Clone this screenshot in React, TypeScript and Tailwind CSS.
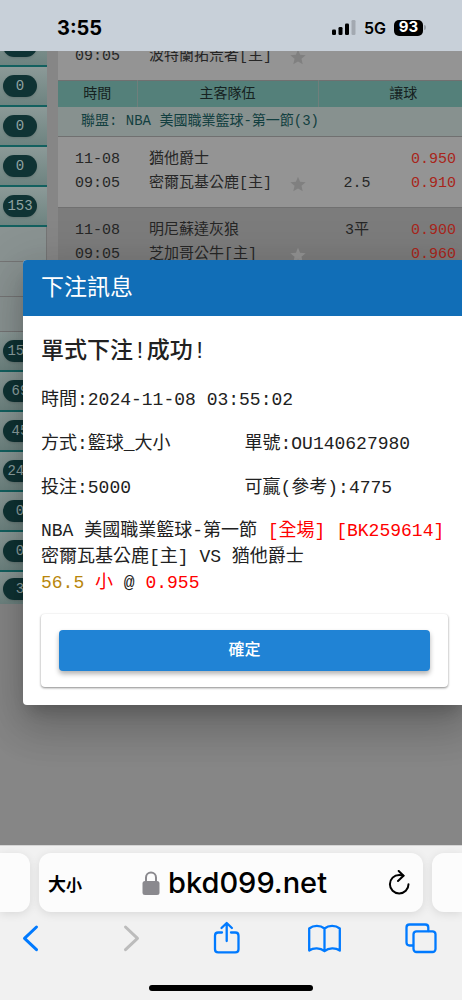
import type { ReactNode } from 'react'

const topCounts = ['', '0', '0', '0', '153']
const bottomCounts = ['150', '69', '45', '240', '0', '0', '3']

type Match = {
  date: string
  time: string
  away: string
  home: string
  lines: { handicap: string; odds: string }[]
  alt?: boolean
}

const matches: Match[] = [
  {
    date: '11-08',
    time: '09:05',
    away: '猶他爵士',
    home: '密爾瓦基公鹿[主]',
    lines: [
      { handicap: '', odds: '0.950' },
      { handicap: '2.5', odds: '0.910' },
    ],
  },
  {
    date: '11-08',
    time: '09:05',
    away: '明尼蘇達灰狼',
    home: '芝加哥公牛[主]',
    lines: [
      { handicap: '3平', odds: '0.900' },
      { handicap: '', odds: '0.960' },
    ],
    alt: true,
  },
]

function StatusBar() {
  return (
    <header className="flex h-[51px] shrink-0 items-center justify-between bg-[#c8d0d9] pt-1 pr-9 pl-[57px] font-['Inter',sans-serif] text-black">
      <span className="text-xl font-bold">3:55</span>
      <div className="flex items-center gap-2">
        <svg width="24" height="15" viewBox="0 0 24 15" aria-hidden="true">
          <rect x="0" y="9.500" width="4" height="5.500" rx="1.3" />
          <rect x="6.500" y="7" width="4" height="8" rx="1.3" />
          <rect x="13" y="3.500" width="4" height="11.500" rx="1.3" />
          <rect x="19.500" y="0" width="4" height="15" rx="1.3" fill="#a3a9b1" />
        </svg>
        <span className="text-base font-semibold">5G</span>
        <div className="flex items-center gap-px">
          <span className="flex h-4 w-[29px] items-center justify-center rounded-[5px] bg-black text-[15px] font-bold text-white">
            93
          </span>
          <span className="h-[5px] w-[2px] rounded-r-full bg-[#9aa1a9]" />
        </div>
      </div>
    </header>
  )
}

function CountCell({ value, last }: { value: string; last?: boolean }) {
  return (
    <li
      className={
        last
          ? 'flex h-8 items-end bg-linear-to-b from-[#8c9a98] to-[#6d8380] pb-1 pl-[3px]'
          : 'flex h-10 items-center border-b-2 border-[#12605f] bg-linear-to-b from-[#8c9a98] to-[#6d8380] pl-[3px]'
      }
    >
      <span className="flex h-[22px] w-[34px] items-center justify-center rounded-full bg-[#0f3334] text-sm text-[#8fa3a3] shadow-sm">
        {value}
      </span>
    </li>
  )
}

function Sidebar() {
  return (
    <ul className="-mt-6 w-[47px] shrink-0">
      {topCounts.map((count, i) => (
        <CountCell key={i} value={count} />
      ))}
      <li className="h-[35px] border-r border-b border-[#757575] bg-[#8a9392]" />
      <li className="h-[35px] border-r border-b border-[#757575] bg-[#8a9392]" />
      <li className="h-[35px] border-r border-b border-[#757575] bg-[#8a9392]" />
      {bottomCounts.map((count, i) => (
        <CountCell key={i} value={count} last={i === bottomCounts.length - 1} />
      ))}
    </ul>
  )
}

function Star({ light }: { light?: boolean }) {
  return (
    <svg
      width="16"
      height="16"
      viewBox="0 0 24 24"
      fill={light ? '#939393' : '#808080'}
      className="shrink-0"
      aria-hidden="true"
    >
      <path d="M12 1l3.2 7.7 8.3.7-6.3 5.4 1.9 8.2L12 18.600l-7.100 4.400 1.900-8.200L.5 9.400l8.300-.7z" />
    </svg>
  )
}

function HomeTeam({ name, alt }: { name: string; alt?: boolean }) {
  return (
    <div className="flex h-6 items-center justify-between pr-3 whitespace-nowrap">
      {name}
      <Star light={alt} />
    </div>
  )
}

function MatchRow({ match }: { match: Match }) {
  return (
    <tr
      className={
        match.alt
          ? 'h-[71px] border-b border-[#707070] bg-[#7c7c7c] align-top'
          : 'h-[71px] border-b border-[#707070] bg-[#949494] align-top'
      }
    >
      <td className="pt-[11px] pl-[17px]">
        <div className="h-6">{match.date}</div>
        <div className="h-6">{match.time}</div>
      </td>
      <td className="pt-[11px] pl-3">
        <div className="h-6">{match.away}</div>
        <HomeTeam name={match.home} alt={match.alt} />
      </td>
      <td className="pt-[11px]">
        {match.lines.map((line, i) => (
          <div key={i} className="flex h-6">
            <span className="w-[78px] text-center">{line.handicap}</span>
            <span className="pl-[15px] text-[#a8251b]">{line.odds}</span>
          </div>
        ))}
      </td>
    </tr>
  )
}

function OddsTable() {
  return (
    <table className="-mt-[9px] w-full min-w-[430px] table-fixed border-collapse text-[15px] leading-6 text-[#262626]">
      <colgroup>
        <col className="w-[79px]" />
        <col className="w-[181px]" />
        <col />
      </colgroup>
      <tbody>
        <tr className="h-[38px] border-b border-[#707070] bg-[#949494] align-top">
          <td className="pt-[3px] pl-[17px]">09:05</td>
          <td className="pt-[3px] pl-3">
            <HomeTeam name="波特蘭拓荒者[主]" />
          </td>
          <td />
        </tr>
        <tr className="h-[27px] bg-[#54807a] text-sm text-[#162221]">
          <th className="border-r border-[#6f7f7c] font-normal">時間</th>
          <th className="border-r border-[#6f7f7c] font-normal">主客隊伍</th>
          <th className="font-normal">讓球</th>
        </tr>
        <tr className="h-[29px] border-b border-[#707070] bg-[#87918f] text-sm text-[#123f40]">
          <td colSpan={3} className="pl-[23px]">
            聯盟: NBA 美國職業籃球-第一節(3)
          </td>
        </tr>
        {matches.map((match) => (
          <MatchRow key={match.away} match={match} />
        ))}
      </tbody>
    </table>
  )
}

function BetDialog() {
  return (
    <section
      role="dialog"
      aria-labelledby="bet-title"
      className="absolute top-[209px] -right-1 left-[23px] overflow-hidden rounded bg-white text-lg text-[#212121] shadow-[0_11px_15px_-7px_rgba(0,0,0,0.2),0_24px_38px_3px_rgba(0,0,0,0.14),0_9px_46px_8px_rgba(0,0,0,0.12)]"
    >
      <h2 id="bet-title" className="flex h-14 items-center bg-[#116eb7] px-[18px] pt-1 text-[23px] text-white">
        下注訊息
      </h2>
      <div className="px-[18px] pt-[18px] pb-[18px]">
        <h3 className="text-[23px] leading-9 font-medium">單式下注!成功!</h3>
        <dl className="mt-2 grid grid-cols-2 leading-[44px]">
          <Field label="時間" wide>2024-11-08 03:55:02</Field>
          <Field label="方式">籃球_大小</Field>
          <Field label="單號">OU140627980</Field>
          <Field label="投注">5000</Field>
          <Field label="可贏(參考)">4775</Field>
        </dl>
        <div className="mt-2 leading-[26px] whitespace-nowrap">
          <p>
            NBA 美國職業籃球-第一節 <span className="text-[#ff0000]">[全場] [BK259614]</span>
          </p>
          <p>密爾瓦基公鹿[主] VS 猶他爵士</p>
          <p>
            <span className="text-[#b8860b]">56.5</span> <span className="text-[#ff0000]">小</span> @{' '}
            <span className="text-[#ff0000]">0.955</span>
          </p>
        </div>
        <div className="mt-[18px] rounded-sm px-[18px] py-4 shadow-[0_1px_3px_rgba(0,0,0,0.2),0_1px_2px_rgba(0,0,0,0.3)]">
          <button
            type="button"
            className="h-[41px] w-full rounded bg-[#2083d5] text-base font-medium text-white shadow-[0_3px_5px_rgba(0,0,0,0.3)]"
          >
            確定
          </button>
        </div>
      </div>
    </section>
  )
}

function Field({ label, wide, children }: { label: string; wide?: boolean; children: ReactNode }) {
  return (
    <div className={wide ? 'col-span-2 flex' : 'flex whitespace-nowrap'}>
      <dt>{label}:</dt>
      <dd>{children}</dd>
    </div>
  )
}

function AddressBar() {
  return (
    <div className="flex h-[59px] gap-[9px]">
      <div className="w-[30px] rounded-r-xl bg-[#fcfcfc] shadow-[0_2px_10px_rgba(0,0,0,0.1)]" />
      <div className="flex flex-1 items-center justify-between rounded-xl bg-[#fcfcfc] pr-3 pl-[9px] shadow-[0_2px_10px_rgba(0,0,0,0.1)]">
        <button
          type="button"
          className="flex items-baseline font-['Noto_Sans_CJK_TC',sans-serif] text-lg font-bold text-black"
        >
          大<span className="text-base">小</span>
        </button>
        <a
          href="#"
          className="flex items-center gap-2 font-['Inter',sans-serif] text-[29px] font-medium text-black"
        >
          <svg width="18" height="24" viewBox="0 0 18 24" aria-hidden="true">
            <rect x="0.500" y="10" width="17" height="14" rx="2.500" fill="#8a898e" />
            <path d="M4 11V6.500a5 5 0 0 1 10 0V11" fill="none" stroke="#8a898e" strokeWidth="2" />
          </svg>
          bkd099.net
        </a>
        <button type="button" aria-label="重新載入">
          <svg
            width="24"
            height="26"
            viewBox="0 0 24 26"
            fill="none"
            stroke="#000"
            strokeWidth="2"
            strokeLinecap="round"
            strokeLinejoin="round"
          >
            <path d="M21.500 14.200a9.300 9.300 0 1 1-9.300-9.300c1.600 0 3 .2 4.300.8" />
            <path d="M11.700 1l4.800 4.700-5.500 5.300" />
          </svg>
        </button>
      </div>
      <div className="w-[30px] rounded-l-xl bg-[#fcfcfc] shadow-[0_2px_10px_rgba(0,0,0,0.1)]" />
    </div>
  )
}

function ToolButton({ label, disabled, children }: { label: string; disabled?: boolean; children: ReactNode }) {
  return (
    <button type="button" aria-label={label} disabled={disabled}>
      <svg
        width="34"
        height="34"
        viewBox="0 0 34 34"
        fill="none"
        stroke={disabled ? '#bcbcbc' : '#007aff'}
        strokeWidth="2.3"
        strokeLinecap="round"
        strokeLinejoin="round"
      >
        {children}
      </svg>
    </button>
  )
}

function BrowserBar() {
  return (
    <footer className="shrink-0 border-t border-[#d5d5d5] bg-[#f1f1f1] pt-[7px] pb-[9px]">
      <AddressBar />
      <nav className="flex items-center justify-between pt-[9px] pr-6 pl-[14px]">
        <ToolButton label="上一頁">
          <path strokeWidth="3" d="M22.500 6 10.500 17.300l12 11.300" />
        </ToolButton>
        <ToolButton label="下一頁" disabled>
          <path strokeWidth="3" d="M13.500 6l12 11.300-12 11.300" />
        </ToolButton>
        <ToolButton label="分享">
          <path d="M13 11.500H9.200c-2 0-3.200 1.200-3.200 3.200v13.500c0 2 1.200 3.200 3.200 3.200h17.100c2 0 3.200-1.200 3.200-3.200V14.700c0-2-1.200-3.200-3.200-3.200H22" />
          <path d="M17.700 20V2.200M12.500 7l5.200-5 5.200 5" />
        </ToolButton>
        <ToolButton label="書籤">
          <path d="M17.500 7.500c-4.300-3.400-11-3.400-15.300 0v22c4.300-3 11-3 15.300.7 4.300-3.700 11-3.700 15.300-.7v-22c-4.300-3.400-11-3.400-15.300 0zM17.500 7.500v22.700" />
        </ToolButton>
        <ToolButton label="分頁">
          <path d="M9 24.500H5.500c-2 0-3-1-3-3v-15c0-2 1-3 3-3h15.800c2 0 3 1 3 3V10" />
          <rect x="9.500" y="10.300" width="22" height="20.700" rx="3" />
        </ToolButton>
      </nav>
      <div className="mx-auto mt-[30px] h-[6px] w-[164px] rounded-full bg-black" />
    </footer>
  )
}

export default function App() {
  return (
    <div className="flex min-h-screen flex-col overflow-hidden bg-[#868686]">
      <StatusBar />
      <main className="relative flex-1 overflow-hidden font-['Liberation_Mono','Noto_Sans_CJK_TC',monospace]">
        <div className="flex gap-[11px]">
          <Sidebar />
          <div className="min-w-0 flex-1">
            <OddsTable />
          </div>
        </div>
        <BetDialog />
      </main>
      <BrowserBar />
    </div>
  )
}
